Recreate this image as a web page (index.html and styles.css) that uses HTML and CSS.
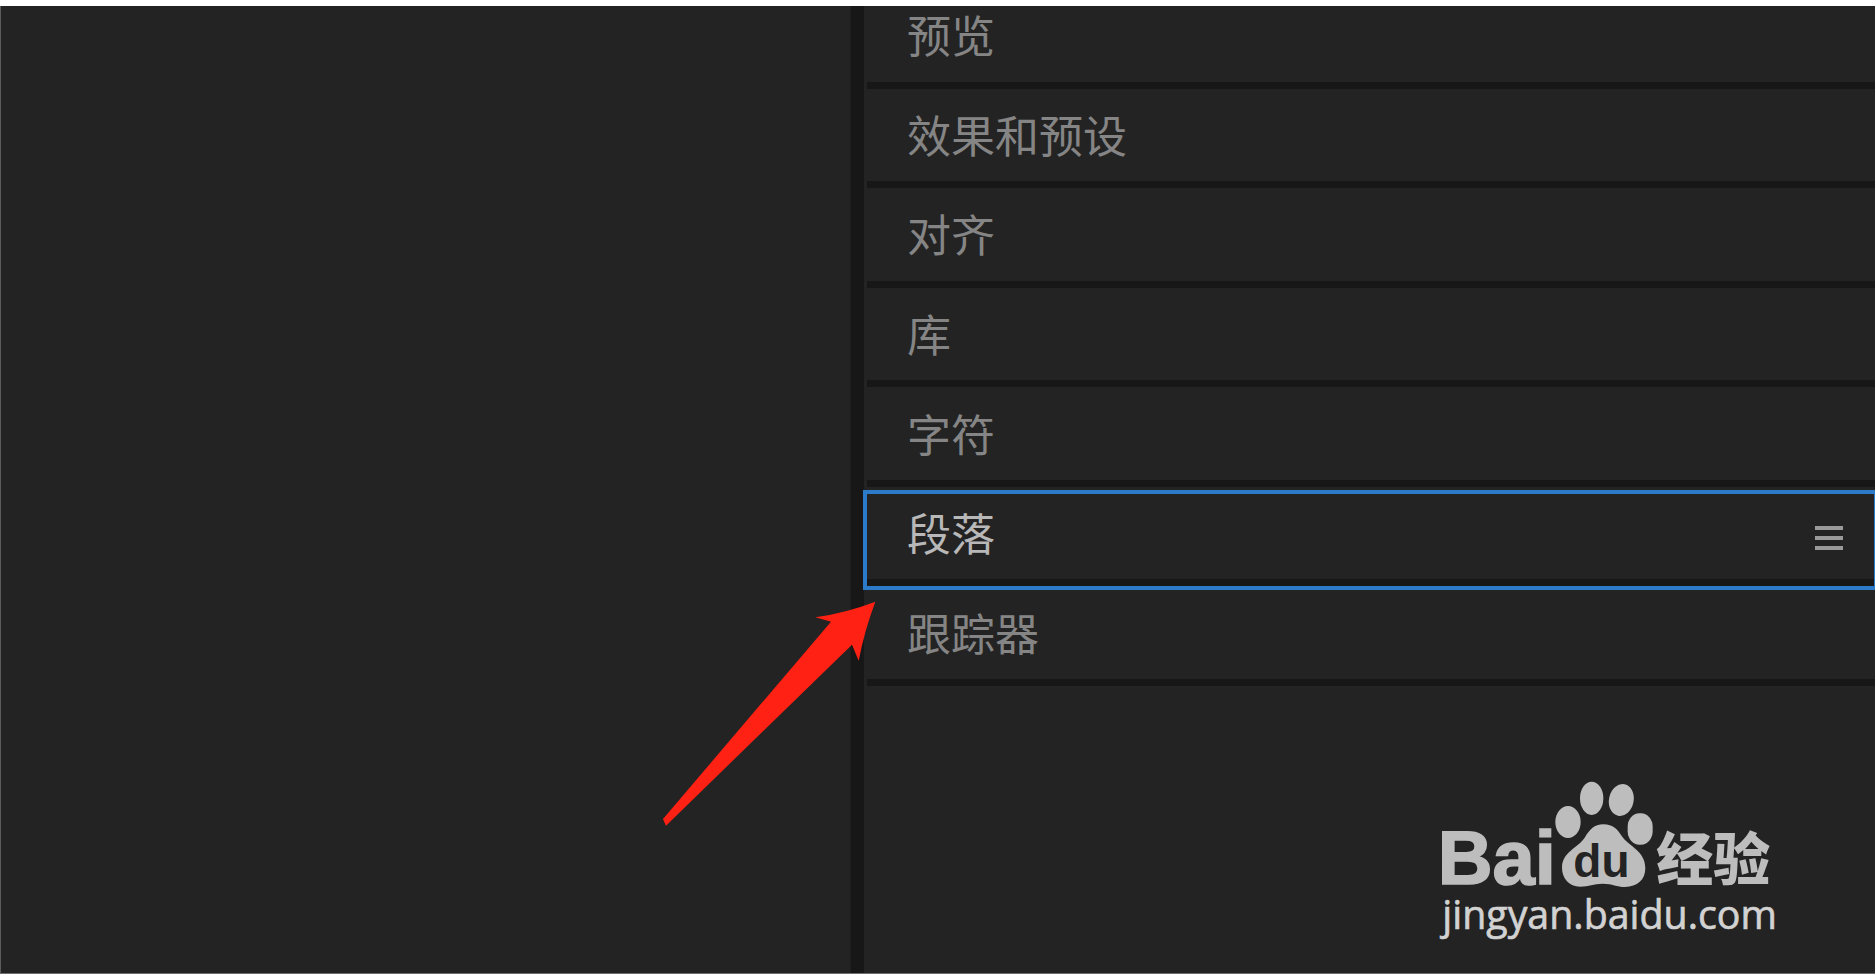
FILE: index.html
```html
<!DOCTYPE html>
<html lang="zh-CN">
<head>
    <meta charset="UTF-8">
    <meta name="viewport" content="width=device-width, initial-scale=1.0">
    <title>段落</title>
    <link rel="stylesheet" href="styles.css">
</head>
<body>
    <main class="workspace">
        <section class="viewer"></section>
        <aside class="panels">
            <ul class="panel-list">
                <li class="panel"><button type="button" class="panel-title">预览</button></li>
                <li class="panel"><button type="button" class="panel-title">效果和预设</button></li>
                <li class="panel"><button type="button" class="panel-title">对齐</button></li>
                <li class="panel"><button type="button" class="panel-title">库</button></li>
                <li class="panel"><button type="button" class="panel-title">字符</button></li>
                <li class="panel active">
                    <button type="button" class="panel-title">段落</button>
                    <button type="button" class="panel-menu" aria-label="菜单">
                        <span></span><span></span><span></span>
                    </button>
                </li>
                <li class="panel"><button type="button" class="panel-title">跟踪器</button></li>
            </ul>
        </aside>

        <svg class="arrow" viewBox="0 0 780 780" aria-hidden="true">
            <path d="M69 717 L573 125 L526 112 Q620 98 706 65 Q674 150 656 242 L636 194 L78 737 Z"/>
        </svg>

        <svg class="watermark" viewBox="0 0 1140 600">
            <text class="logo-text" x="53" y="370">Bai</text>
            <g class="paw">
                <ellipse cx="444" cy="183" rx="38" ry="48"/>
                <ellipse cx="515" cy="112" rx="35" ry="50"/>
                <ellipse cx="604" cy="117" rx="37" ry="48" transform="rotate(12 604 117)"/>
                <rect x="623" y="157" width="75" height="94" rx="35" ry="40"/>
                <path d="M550 190 C580 190 592 205 608 229 C628 257 676 270 676 322 C676 356 652 378 615 378 C590 378 578 368 548 368 C520 368 508 377 480 377 C448 377 426 352 426 320 C426 273 474 260 494 230 C510 205 522 190 550 190 Z"/>
            </g>
            <text class="logo-du" x="460" y="349">du</text>
            <text class="logo-cn" x="709" y="357">经验</text>
            <text class="logo-url" x="67" y="504">jingyan.baidu.com</text>
        </svg>
    </main>
</body>
</html>
```
FILE: styles.css
```css
* {
    box-sizing: border-box;
}

body {
    margin: 0;
    height: 100vh;
    padding: 6px 0 5px;
    background-color: #fff;
    font-family: "Noto Sans CJK SC", sans-serif;
}

.workspace {
    position: relative;
    display: grid;
    grid-template-columns: 850fr 1024fr;
    height: 100%;
    overflow: hidden;
    background-color: #232323;
    border-left: 1px solid #5c5c5c;
    border-bottom: 1px solid #706d70;
}

.viewer {
    border-right: 1px solid #1e1e1e;
}

.panels {
    border-left: 13px solid #171717;
}

.panel-list {
    display: grid;
    grid-auto-rows: 1fr;
    height: 697px;
    margin: -17px 0 0 3px;
    padding: 0;
    list-style: none;
}

.panel {
    position: relative;
    display: flex;
    align-items: center;
    justify-content: space-between;
    padding: 0 32px 2px 40px;
    border-bottom: 7px solid #171717;
}

.panel-title {
    padding: 0;
    border: none;
    background: none;
    color: #858585;
    font-family: inherit;
    font-size: 44px;
    line-height: 52px;
    cursor: pointer;
}

.active .panel-title {
    color: #b8b8b8;
}

/* focus frame around the open panel */
.active::after {
    content: "";
    position: absolute;
    inset: 3px 0 -11px -4px;
    border: 4px solid #2c7bcb;
    border-right-width: 1px;
    pointer-events: none;
}

.panel-menu {
    display: grid;
    gap: 6px;
    width: 28px;
    margin-top: 12px;
    padding: 0;
    border: none;
    background: none;
    cursor: pointer;
}

.panel-menu span {
    height: 4px;
    background-color: #9a9a9a;
}

.arrow {
    position: absolute;
    left: 639px;
    top: 574px;
    width: 260px;
    height: 260px;
    fill: #ff2113;
}

.watermark {
    position: absolute;
    right: 75px;
    bottom: 12px;
    width: 380px;
    height: 200px;
}

.paw,
.logo-text,
.logo-cn {
    fill: #bdbdbd;
}

.logo-text {
    font: bold 228px "Liberation Sans", sans-serif;
    stroke: #bdbdbd;
    stroke-width: 5px;
}

.logo-du {
    font: bold 138px "Liberation Sans", sans-serif;
    fill: #232323;
}

.logo-cn {
    font: 900 171px "Noto Sans CJK SC", sans-serif;
}

.logo-url {
    font: 118px "Open Sans", sans-serif;
    fill: #d2d2d2;
    stroke: #d2d2d2;
    stroke-width: 2px;
}
```
